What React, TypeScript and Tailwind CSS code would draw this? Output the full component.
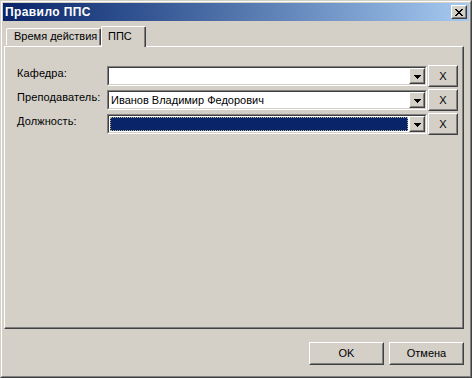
import React from "react";

const font = { fontFamily: '"Liberation Sans", Arial, sans-serif' };

function Raised({ className = "", children }: { className?: string; children?: React.ReactNode }) {
  return (
    <div className={`border-t border-l border-t-white border-l-white border-r border-b border-r-[#404040] border-b-[#404040] bg-[#d4d0c8] ${className}`}>
      <div className="w-full h-full border-t border-l border-t-[#d4d0c8] border-l-[#d4d0c8] border-r border-b border-r-[#808080] border-b-[#808080] flex items-center justify-center">
        {children}
      </div>
    </div>
  );
}

function Arrow() {
  return (
    <Raised className="w-[16px] h-[16px] shrink-0">
      <svg width="7" height="4" viewBox="0 0 7 4" className="mt-[1px]">
        <path d="M0 0h7v1H0zM1 1h5v1H1zM2 2h3v1H2zM3 3h1v1H3z" fill="#000" />
      </svg>
    </Raised>
  );
}

function Combo({ value, selected }: { value?: string; selected?: boolean }) {
  return (
    <div className="w-[320px] h-[20px] mt-[1px] border-t border-l border-t-[#808080] border-l-[#808080] border-r border-b border-r-white border-b-white">
      <div className="w-full h-full border-t border-l border-t-[#404040] border-l-[#404040] border-r border-b border-r-[#d4d0c8] border-b-[#d4d0c8] bg-white flex">
        <div className="flex-1 p-[1px] flex">
          {selected ? (
            <div className="flex-1 bg-[#0a246a] border border-dotted border-[#b8b890]" />
          ) : (
            <div className="flex-1 pl-[1px] text-[11px] leading-[14px] text-black whitespace-nowrap">{value}</div>
          )}
        </div>
        <Arrow />
      </div>
    </div>
  );
}

function Row({ label, value, selected }: { label: string; value?: string; selected?: boolean }) {
  return (
    <div className="flex items-start h-[22px] mb-[2px]">
      <div className="w-[90px] mt-[1px] text-[11px] leading-[15px] tracking-[0.1px] text-black whitespace-nowrap">{label}</div>
      <Combo value={value} selected={selected} />
      <Raised className="w-[30px] h-[22px] ml-[1px] text-[11px] text-black">X</Raised>
    </div>
  );
}

export default function App() {
  return (
    <div style={font} className="w-[472px] h-[378px] bg-[#d4d0c8] text-black">
      <div className="w-full h-full border-t border-l border-t-[#d4d0c8] border-l-[#d4d0c8] border-r border-b border-r-[#404040] border-b-[#404040]">
        <div className="w-full h-full border-t border-l border-t-white border-l-white border-r border-b border-r-[#808080] border-b-[#808080] p-[1px] flex flex-col">
          {/* Title bar */}
          <div className="h-[18px] shrink-0 bg-gradient-to-r from-[#0a246a] to-[#a6caf0] flex items-center pl-[2px] pr-[2px]">
            <span className="text-white font-bold text-[12px] tracking-[0.4px] leading-[14px] flex-1">Правило ППС</span>
            <Raised className="w-[16px] h-[14px]">
              <svg width="8" height="7" viewBox="0 0 8 7">
                <path d="M0 0h2v1H0zM6 0h2v1H6zM1 1h2v1H1zM5 1h2v1H5zM2 2h4v1H2zM3 3h2v1H3zM2 4h4v1H2zM1 5h2v1H1zM5 5h2v1H5zM0 6h2v1H0zM6 6h2v1H6z" fill="#000" />
              </svg>
            </Raised>
          </div>

          {/* Tabs */}
          <div className="mt-[5px] ml-[1px] w-[460px] flex flex-col">
            <div className="flex items-end h-[20px] pl-[2px] relative z-10">
              <div className="w-[95px] h-[17px] border-t border-l border-t-white border-l-white border-r border-r-[#404040] rounded-tl-[2px] rounded-tr-[2px] mb-[1px]">
                <div className="h-full border-r border-r-[#808080] pl-[7px] text-[11px] leading-[15px] whitespace-nowrap">Время действия</div>
              </div>
              <div className="w-[45px] h-[21px] mb-[-1px] bg-[#d4d0c8] border-t border-l border-t-white border-l-white border-r border-r-[#404040] rounded-tl-[2px] rounded-tr-[2px]">
                <div className="h-full border-r border-r-[#808080] pl-[6px] pt-[2px] text-[11px] leading-[15px] whitespace-nowrap">ППС</div>
              </div>
            </div>
            <div className="h-[283px] border-t border-l border-t-white border-l-white border-r border-b border-r-[#404040] border-b-[#404040]">
              <div className="w-full h-full border-r border-b border-r-[#808080] border-b-[#808080] pt-[18px] pl-[12px]">
                <Row label="Кафедра:" />
                <Row label="Преподаватель:" value="Иванов Владимир Федорович" />
                <Row label="Должность:" selected />
              </div>
            </div>
          </div>

          {/* Buttons */}
          <div className="mt-[13px] flex justify-end gap-[5px] w-[461px]">
            <Raised className="w-[75px] h-[23px] text-[11px]">OK</Raised>
            <Raised className="w-[75px] h-[23px] text-[11px]">Отмена</Raised>
          </div>
        </div>
      </div>
    </div>
  );
}
